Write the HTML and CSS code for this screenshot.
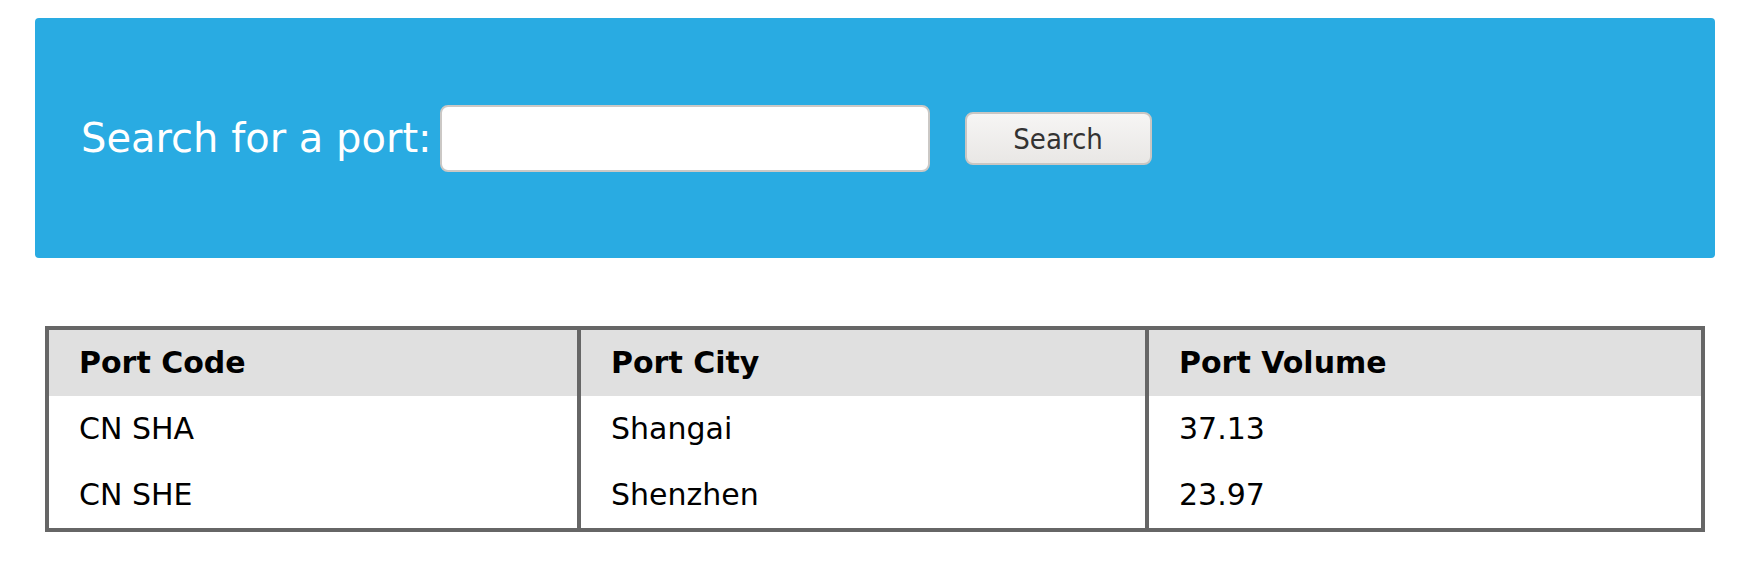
FILE: index.html
```html
<!DOCTYPE html>
<html>
<head>
<meta charset="utf-8">
<title>Port search</title>
<link rel="stylesheet" href="styles.css">
</head>
<body>
<div class="wrap">
  <form class="search-box">
    <label class="search-label" for="q">Search for a port:</label>
    <input class="search-input" id="q" type="text">
    <button class="search-btn" type="button">Search</button>
  </form>
  <table class="ports">
    <colgroup><col class="c1"><col class="c2"><col class="c3"></colgroup>
    <thead>
      <tr><th>Port Code</th><th>Port City</th><th>Port Volume</th></tr>
    </thead>
    <tbody>
      <tr><td>CN SHA</td><td>Shangai</td><td>37.13</td></tr>
      <tr><td>CN SHE</td><td>Shenzhen</td><td>23.97</td></tr>
    </tbody>
  </table>
</div>
</body>
</html>
```

FILE: styles.css
```css
html, body {
  margin: 0;
  padding: 0;
  background: #fff;
}
body {
  font-family: "DejaVu Sans", sans-serif;
  color: #000;
}
.wrap {
  padding: 18px 33px 0 35px;
}
.search-box {
  margin: 0;
  height: 240px;
  background: #29abe2;
  border-radius: 4px;
  display: flex;
  align-items: center;
  padding-left: 46px;
  box-sizing: border-box;
}
.search-label {
  color: #fff;
  font-size: 40px;
  line-height: 48px;
  margin-right: 8px;
}
.search-input {
  width: 490px;
  height: 67px;
  box-sizing: border-box;
  border: 2px solid #cbc8c5;
  border-radius: 8px;
  background: #fff;
  margin: 0 35px 0 0;
  padding: 0 10px;
  font-size: 24px;
}
.search-btn {
  width: 187px;
  height: 53px;
  box-sizing: border-box;
  border: 2px solid #c9c6c3;
  border-radius: 8px;
  background: linear-gradient(#f6f5f4, #e9e7e5);
  color: #333;
  font-family: "DejaVu Sans Condensed", "DejaVu Sans", sans-serif;
  font-stretch: condensed;
  font-size: 29px;
  padding: 0;
  margin-top: 1px;
}
.ports {
  margin: 68px 10px 0;
  width: 1660px;
  border-collapse: collapse;
  border: 4px solid #666;
  table-layout: fixed;
}
.ports th, .ports td {
  border-left: 4px solid #666;
  border-right: 4px solid #666;
  padding: 15px 10px 15px 30px;
  text-align: left;
  font-size: 30px;
  line-height: 36px;
}
.ports th {
  background: #e0e0e0;
  font-weight: bold;
}
.ports .c1 { width: 532px; }
.ports .c2 { width: 568px; }
.ports .c3 { width: 556px; }
```
